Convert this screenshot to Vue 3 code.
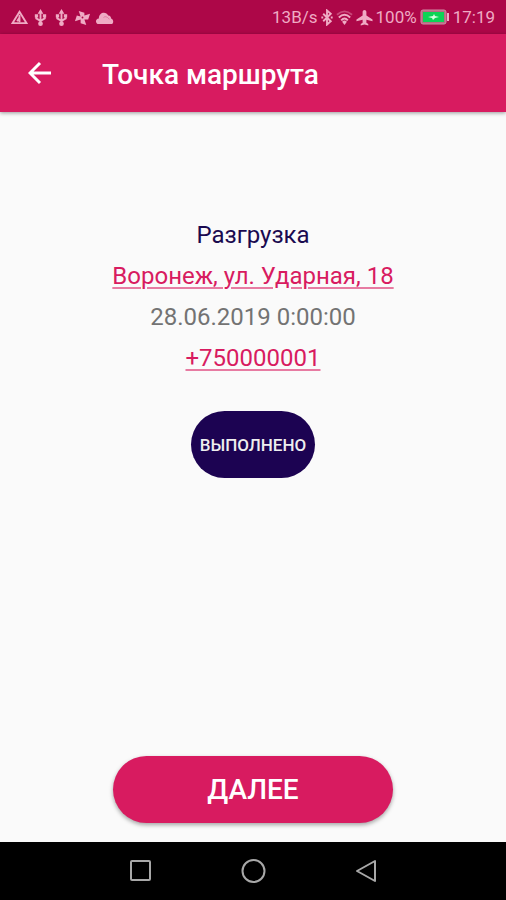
<script setup>
const title = 'Точка маршрута'
const stop = {
  kind: 'Разгрузка',
  address: 'Воронеж, ул. Ударная, 18',
  time: '28.06.2019 0:00:00',
  phone: '+750000001',
}
const usbIcons = [1, 2]
</script>

<template>
  <div class="screen">
    <div class="status">
      <div class="notices">
        <svg class="glyph" viewBox="0 0 18 18" aria-hidden="true">
          <path d="M9 3 L16.500 15 H1.500 Z" class="line" />
          <path d="M9 6 V14 M6.500 13 L9 9" class="line" />
        </svg>
        <svg v-for="n in usbIcons" :key="n" class="glyph" viewBox="0 0 18 18" aria-hidden="true">
          <path d="M9 3 V14 M4.500 7 V10 L9 12.500 L13.500 10 V7" class="line" />
          <path d="M9 0 L12 5 H6 Z M3 5.500 H6.500 V9 H3 Z M11.500 5.500 H15 V9 H11.500 Z" />
          <circle cx="9" cy="15.500" r="2.500" />
        </svg>
        <svg class="glyph" viewBox="0 0 18 18" aria-hidden="true">
          <path d="M7 8 L5 2 L11 4 L11 7 L17 5 L15 11 L11 11 L13 17 L7 15 L7 11 L1 13 L3 7 Z" />
          <circle cx="9" cy="9" r="1" class="hub" />
        </svg>
        <svg class="glyph cloud" viewBox="0 0 20 18" aria-hidden="true">
          <path d="M4 16 C0 16 0 10 4 10 C4 3 12 2 14 7 C16 7 17 9 17 10 C20 11 20 16 17 16 Z" />
          <path d="M9 9 C11 7 14 9 15 11" class="crease" />
        </svg>
      </div>
      <div class="system">
        <span>13B/s</span>
        <svg class="bluetooth" viewBox="0 0 12 18" aria-hidden="true">
          <path d="M2 5 L10 13 L6 16.500 V1.500 L10 5 L2 13" class="line" />
          <path d="M0 8 H2 V10 H0 Z M10 8 H12 V10 H10 Z" />
        </svg>
        <svg class="glyph" viewBox="0 0 18 18" aria-hidden="true">
          <path d="M1 6 Q9 -1 17 6" class="line faint" />
          <path d="M3 9 Q9 3 15 9 M5.500 12 Q9 8 12.500 12" class="line" />
          <path d="M6.500 13.500 Q9 11 11.500 13.500 L9 17 Z" />
        </svg>
        <svg class="glyph" viewBox="0 0 18 18" aria-hidden="true">
          <path d="M9 1 C10 1 11 2 11 3 V7 L17.500 11 V13 L11 11.500 V14.500 L13 16 V17.500 L9 16.500 L5 17.500 V16 L7 14.500 V11.500 L0.500 13 V11 L7 7 V3 C7 2 8 1 9 1 Z" />
        </svg>
        <span>100%</span>
        <svg class="battery" viewBox="0 0 30 16" aria-hidden="true">
          <rect x="1" y="1" width="25" height="14" rx="2" class="shell" />
          <rect x="3" y="3" width="21" height="10" class="charge" />
          <path d="M27 4 H29 V12 H27 Z" />
          <path d="M8 8 L13 7 L14 5 L15 7 L19 8 L15 9 L13 11 L12 9 Z" class="bolt" />
        </svg>
        <span>17:19</span>
      </div>
    </div>

    <header class="bar">
      <button class="back" type="button" aria-label="Назад">
        <svg viewBox="0 0 24 24" aria-hidden="true">
          <path d="M23 12 H2 M12 2 L2 12 L12 22" />
        </svg>
      </button>
      <h1>{{ title }}</h1>
    </header>

    <main>
      <p class="kind">{{ stop.kind }}</p>
      <p><a href="#map">{{ stop.address }}</a></p>
      <p>{{ stop.time }}</p>
      <p><a :href="'tel:' + stop.phone">{{ stop.phone }}</a></p>
      <button class="done" type="button">ВЫПОЛНЕНО</button>
      <button class="next" type="button">ДАЛЕЕ</button>
    </main>

    <nav>
      <button type="button" aria-label="Недавние">
        <svg viewBox="0 0 26 26"><rect x="4" y="3" width="19" height="19" rx="1" /></svg>
      </button>
      <button type="button" aria-label="Домой">
        <svg viewBox="0 0 26 26"><circle cx="13.500" cy="13" r="11" /></svg>
      </button>
      <button type="button" aria-label="Обратно">
        <svg viewBox="0 0 26 26"><path d="M22 3 V23 L4 13 Z" /></svg>
      </button>
    </nav>
  </div>
</template>

<style>
body {
  margin: 0;
  background: #fafafa;
}
</style>

<style scoped>
.screen {
  display: flex;
  flex-direction: column;
  min-height: 100vh;
  background: #fafafa;
  color: #737373;
  font-family: Roboto, "Liberation Sans", sans-serif;
}
button {
  border: 0;
  padding: 0;
  background: none;
  color: inherit;
  font: inherit;
  cursor: pointer;
}
.status {
  box-sizing: border-box;
  display: flex;
  justify-content: space-between;
  align-items: center;
  height: 34px;
  padding: 0 11px;
  background: #ad0748;
  color: #efabc4;
  font-size: 17px;
  line-height: 20px;
}
.status svg {
  display: block;
  fill: #efabc4;
}
.status .line {
  fill: none;
  stroke: #efabc4;
  stroke-width: 2;
}
.status .faint {
  opacity: 0.4;
}
.status .hub {
  fill: #ad0748;
}
.notices {
  display: flex;
  gap: 4px;
}
.system {
  display: flex;
  align-items: center;
  gap: 3px;
}
.glyph {
  width: 17px;
  height: 17px;
}
.cloud {
  width: 19px;
}
.cloud .crease {
  fill: none;
  stroke: #d9779c;
}
.bluetooth {
  width: 12px;
  height: 17px;
}
.battery {
  width: 30px;
  height: 16px;
}
.status .battery .shell {
  fill: #b76a83;
  stroke: #d08ca5;
}
.status .battery .charge {
  fill: #0bd455;
}
.status .battery .bolt {
  fill: #d5ffe0;
}
.bar {
  display: flex;
  align-items: center;
  height: 78px;
  padding: 0 26px;
  gap: 48px;
  background: #d81b60;
  color: #fff;
  box-shadow: 0 1px 4px rgba(0, 0, 0, 0.4);
}
.back {
  display: flex;
  padding: 2px;
}
.back svg {
  width: 24px;
  height: 24px;
  fill: none;
  stroke: #fff;
  stroke-width: 3;
}
h1 {
  margin: 0;
  padding-top: 3px;
  font-size: 28px;
  line-height: 32px;
  font-weight: 500;
}
main {
  flex: 1;
  display: flex;
  flex-direction: column;
  align-items: center;
  padding: 103px 20px 19px;
}
p {
  margin: 0;
  font-size: 24px;
  line-height: 41px;
  text-align: center;
}
.kind {
  color: #1a0a50;
}
a {
  color: #d81b60;
  text-decoration-color: #e77ba2;
  text-decoration-thickness: 2px;
  text-underline-offset: 3px;
}
.done {
  height: 67px;
  margin-top: 32px;
  padding: 0 9px;
  border-radius: 34px;
  background: #1c0352;
  color: #eee;
  font-size: 17px;
  font-weight: 500;
}
.next {
  width: 60%;
  height: 67px;
  margin-top: auto;
  border-radius: 34px;
  background: #d81b60;
  color: #fff;
  font-size: 28px;
  font-weight: 500;
  box-shadow: 0 2px 4px rgba(0, 0, 0, 0.35);
}
nav {
  display: flex;
  justify-content: center;
  align-items: center;
  gap: 87px;
  height: 58px;
  background: #000;
}
nav svg {
  display: block;
  width: 26px;
  height: 26px;
  fill: none;
  stroke: #a8a8a8;
  stroke-width: 2;
  stroke-linejoin: round;
}
</style>
